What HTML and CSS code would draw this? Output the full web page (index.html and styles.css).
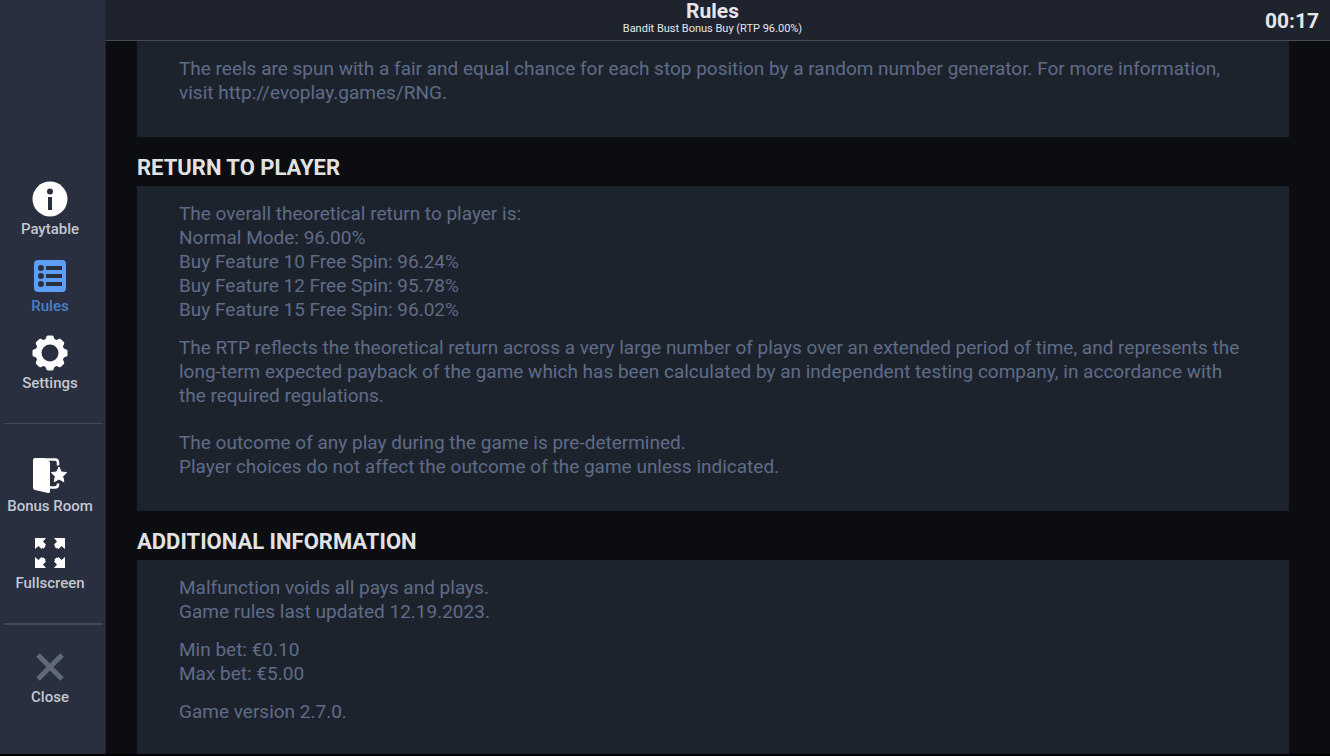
FILE: index.html
```
<!DOCTYPE html>
<html lang="en">
<head>
    <meta charset="UTF-8">
    <meta name="viewport" content="width=device-width, initial-scale=1.0">
    <title>Rules</title>
    <link rel="stylesheet" href="styles.css">
</head>
<body>

<nav class="sidebar">
    <button class="item" type="button">
        <svg class="icon" viewBox="0 0 36 36"><circle cx="18" cy="18" r="17.500" fill="#fff"/><circle cx="18" cy="10.500" r="3" fill="#292f3f"/><path d="M16 16h4v13h-4z" fill="#292f3f"/></svg>
        <span>Paytable</span>
    </button>
    <button class="item active" type="button">
        <svg class="icon" viewBox="0 0 36 36"><rect x="2" y="2" width="32" height="32" rx="4" fill="#5c9df5"/><g fill="#292f3f"><circle cx="9" cy="10" r="3"/><circle cx="9" cy="18" r="3"/><circle cx="9" cy="26" r="3"/><path d="M14 8h16v4H14zM14 16h16v4H14zM14 24h16v4H14z"/></g></svg>
        <span>Rules</span>
    </button>
    <button class="item" type="button">
        <svg class="icon" viewBox="0 0 36 36"><g fill="#fff"><path fill-rule="evenodd" d="M18 3.500a14.500 14.500 0 1 0 0 29a14.500 14.500 0 1 0 0-29zM18 9.500a8.500 8.500 0 1 1 0 17a8.500 8.500 0 1 1 0-17z"/><path id="tooth" d="M13 5.500L14.500 1.500Q15 .5 16 .5h4q1 0 1.500 1L23 5.500z"/><use href="#tooth" transform="rotate(45 18 18)"/><use href="#tooth" transform="rotate(90 18 18)"/><use href="#tooth" transform="rotate(135 18 18)"/><use href="#tooth" transform="rotate(180 18 18)"/><use href="#tooth" transform="rotate(225 18 18)"/><use href="#tooth" transform="rotate(270 18 18)"/><use href="#tooth" transform="rotate(315 18 18)"/></g></svg>
        <span>Settings</span>
    </button>
    <hr class="divider">
    <button class="item" type="button">
        <svg class="icon" viewBox="0 0 36 36"><path d="M3 0h9l4 2q2 1 2 3v28.500q0 2-2 1.500L3 32q-2-.5-2-2.500V2q0-2 2-2z" fill="#fff"/><path d="M10 1.500h13q3 0 3 3v3M17 29.500h6q3 0 3-3v-1" fill="none" stroke="#fff" stroke-width="2.500"/><path d="M27 9l2.300 5 5.400.6-4 3.700 1.100 5.400L27 21l-4.800 2.700 1.100-5.400-4-3.700 5.400-.6z" fill="#fff" stroke="#fff" stroke-linejoin="round"/></svg>
        <span>Bonus Room</span>
    </button>
    <button class="item" type="button">
        <svg class="icon" viewBox="0 0 36 36" fill="#fff"><path id="arrow" d="M3 3h11l-3 3.500 3 3-1 1 .5 1-2 2-1-.5-1 1-3-3L3 14z"/><use href="#arrow" transform="rotate(90 18 18)"/><use href="#arrow" transform="rotate(180 18 18)"/><use href="#arrow" transform="rotate(270 18 18)"/></svg>
        <span>Fullscreen</span>
    </button>
    <hr class="divider thick">
    <button class="item" type="button">
        <svg class="icon" viewBox="0 0 36 36"><path d="M6 6l24 24M30 6L6 30" stroke="#5f6a78" stroke-width="5"/></svg>
        <span>Close</span>
    </button>
</nav>

<div class="page">
    <header class="header">
        <div class="heading">
            <h1>Rules</h1>
            <p>Bandit Bust Bonus Buy (RTP 96.00%)</p>
        </div>
        <time class="clock">00:17</time>
    </header>

    <main class="content">
        <section class="panel">
            <p>The reels are spun with a fair and equal chance for each stop position by a random number generator. For more information, visit http://evoplay.games/RNG.</p>
        </section>

        <h2>RETURN TO PLAYER</h2>
        <section class="panel">
            <p>The overall theoretical return to player is:<br>
                Normal Mode: 96.00%<br>
                Buy Feature 10 Free Spin: 96.24%<br>
                Buy Feature 12 Free Spin: 95.78%<br>
                Buy Feature 15 Free Spin: 96.02%</p>
            <p>The RTP reflects the theoretical return across a very large number of plays over an extended period of time, and represents the long-term expected payback of the game which has been calculated by an independent testing company, in accordance with the required regulations.</p>
            <p class="outcome">The outcome of any play during the game is pre-determined.<br>
                Player choices do not affect the outcome of the game unless indicated.</p>
        </section>

        <h2>ADDITIONAL INFORMATION</h2>
        <section class="panel">
            <p>Malfunction voids all pays and plays.<br>
                Game rules last updated 12.19.2023.</p>
            <p>Min bet: €0.10<br>
                Max bet: €5.00</p>
            <p>Game version 2.7.0.</p>
        </section>
    </main>
</div>

</body>
</html>
```

FILE: styles.css
```
* {
    box-sizing: border-box;
}
body {
    font-family: Roboto, Arial, sans-serif;
    background-color: #000;
    margin: 0;
    padding-bottom: 2px;
    display: flex;
    height: 100vh;
    overflow: hidden;
}
.sidebar {
    width: 106px;
    flex-shrink: 0;
    padding: 181px 3px 0 4px;
    background-color: #292f3f;
    border-right: 1px solid #20242e;
    display: flex;
    flex-direction: column;
    overflow: hidden;
}
.item {
    display: flex;
    flex-direction: column;
    align-items: center;
    gap: 4px;
    width: 92px;
    padding: 0;
    border: none;
    background: none;
    color: #c3c7d0;
    font-family: inherit;
    font-size: 15px;
    font-weight: 500;
    line-height: 16px;
    white-space: nowrap;
    cursor: pointer;
}
.item + .item {
    margin-top: 21px;
}
.item.active {
    color: #4a80c8;
}
.icon {
    width: 36px;
    height: 36px;
}
.divider {
    width: 100%;
    margin: 32px 0 34px;
    border: none;
    border-top: 1px solid #424959;
}
.divider.thick {
    margin: 32px 0 24px;
    border-top-width: 2px;
}
.page {
    flex: 1;
    min-width: 0;
    display: flex;
    flex-direction: column;
    background-color: #0b0d11;
}
.header {
    display: grid;
    grid-template-columns: 1fr auto 1fr;
    align-items: center;
    height: 41px;
    flex-shrink: 0;
    padding-right: 11px;
    background-color: #1e232d;
    border-bottom: 1px solid #484c56;
    color: #e4e6ec;
}
.heading {
    grid-column: 2;
    padding-bottom: 6px;
    text-align: center;
}
.heading h1 {
    margin: 0;
    font-size: 21px;
    line-height: 22px;
}
.heading p {
    margin: 0;
    font-size: 11px;
    line-height: 13px;
}
.clock {
    justify-self: end;
    font-size: 21px;
    font-weight: bold;
}
.content {
    flex: 1;
    min-height: 0;
    padding: 0 41px 0 31px;
    overflow: hidden;
}
.content h2 {
    margin: 0;
    padding: 19px 0 6px;
    color: #e2e2e2;
    font-size: 22px;
    line-height: 24px;
}
.panel {
    padding: 16px 42px 18px;
    background-color: #1d232d;
    color: #5f6c87;
    font-size: 19px;
    line-height: 24px;
}
.panel p {
    margin: 0 0 14px;
}
.panel .outcome {
    margin-top: 23px;
}
.panel:last-child {
    min-height: 200px;
}
```
